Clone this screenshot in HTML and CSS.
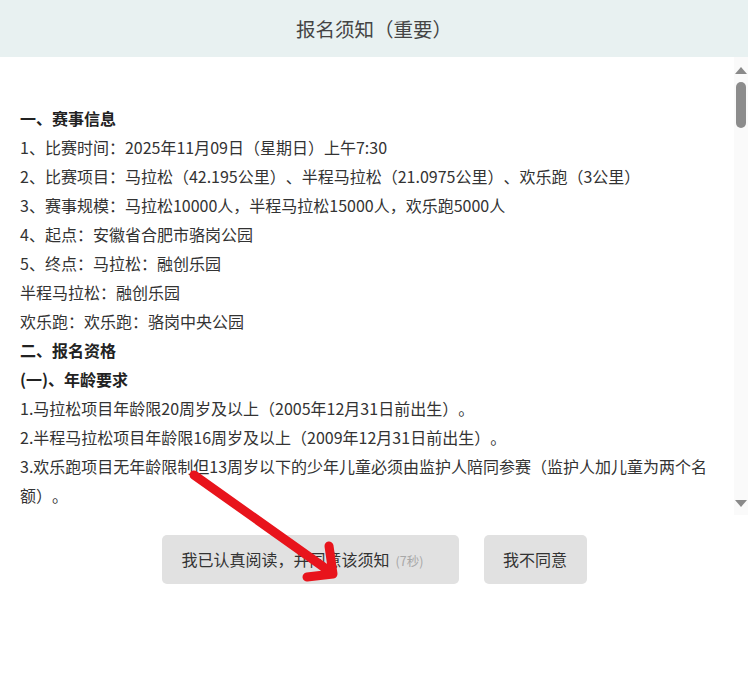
FILE: index.html
```html
<!DOCTYPE html>
<html lang="zh-CN">
<head>
<meta charset="utf-8">
<title>报名须知（重要）</title>
<link rel="stylesheet" href="styles.css">
</head>
<body>
<div class="page">
  <div class="header">报名须知（重要）</div>
  <div class="content">
    <div class="text">
      <p class="b">一、赛事信息</p>
      <p>1、比赛时间：2025年11月09日（星期日）上午7:30</p>
      <p>2、比赛项目：马拉松（42.195公里）、半程马拉松（21.0975公里）、欢乐跑（3公里）</p>
      <p>3、赛事规模：马拉松10000人，半程马拉松15000人，欢乐跑5000人</p>
      <p>4、起点：安徽省合肥市骆岗公园</p>
      <p>5、终点：马拉松：融创乐园</p>
      <p>半程马拉松：融创乐园</p>
      <p>欢乐跑：欢乐跑：骆岗中央公园</p>
      <p class="b">二、报名资格</p>
      <p class="b">(一)、年龄要求</p>
      <p>1.马拉松项目年龄限20周岁及以上（2005年12月31日前出生）。</p>
      <p>2.半程马拉松项目年龄限16周岁及以上（2009年12月31日前出生）。</p>
      <p>3.欢乐跑项目无年龄限制但13周岁以下的少年儿童必须由监护人陪同参赛（监护人加儿童为两个名额）。</p>
    </div>
    <div class="scrollbar">
      <div class="arrow-up"></div>
      <div class="thumb"></div>
      <div class="spacer"></div>
      <div class="arrow-down"></div>
    </div>
  </div>
  <div class="actions">
    <div class="btn btn-agree">我已认真阅读，并同意该须知<span class="count">(7秒)</span></div>
    <div class="btn btn-deny">我不同意</div>
  </div>
  <svg class="annot" width="748" height="700" viewBox="0 0 748 700">
    <g stroke="#e8141c" stroke-width="9" stroke-linecap="round" stroke-linejoin="round" fill="none">
      <line x1="194" y1="475" x2="332" y2="573"/>
      <polyline points="329,546 333,574 307,577"/>
    </g>
  </svg>
</div>
</body>
</html>
```
FILE: styles.css
```css
html, body {
  margin: 0;
  padding: 0;
  background: #ffffff;
}
.page {
  position: relative;
  width: 748px;
  height: 700px;
  overflow: hidden;
  font-family: "Noto Sans CJK SC", "Noto Sans", sans-serif;
  color: #333333;
  text-spacing-trim: space-all;
}
.header {
  height: 57px;
  line-height: 57px;
  background: #e8f1f1;
  text-align: center;
  font-size: 19.5px;
  color: #444444;
}
.content {
  display: flex;
  height: 458px;
}
.text {
  flex: 1;
  padding: 47px 19px 0 20px;
  overflow: hidden;
  font-size: 16px;
  line-height: 29px;
}
.text p {
  margin: 0;
}
.text .b {
  font-weight: bold;
  color: #222222;
}
.scrollbar {
  width: 14px;
  display: flex;
  flex-direction: column;
  align-items: center;
  background: #fafafa;
}
.arrow-up {
  margin-top: 10px;
  width: 0;
  height: 0;
  border-left: 6px solid transparent;
  border-right: 6px solid transparent;
  border-bottom: 7px solid #8a8a8a;
}
.thumb {
  margin-top: 8px;
  width: 10px;
  height: 46px;
  border-radius: 5px;
  background: #8c8c8c;
}
.spacer {
  flex: 1;
}
.arrow-down {
  margin-bottom: 8px;
  width: 0;
  height: 0;
  border-left: 6px solid transparent;
  border-right: 6px solid transparent;
  border-top: 7px solid #8a8a8a;
}
.actions {
  display: flex;
  justify-content: center;
  gap: 25px;
  margin-top: 20px;
}
.btn {
  height: 49px;
  line-height: 49px;
  background: #e1e1e1;
  border-radius: 5px;
  font-size: 16px;
  color: #333333;
  box-sizing: border-box;
}
.btn-agree {
  width: 297px;
  padding-left: 20px;
}
.btn-deny {
  width: 103px;
  text-align: center;
}
.count {
  font-size: 12.5px;
  color: #a8a8a8;
  margin-left: 6px;
}
.annot {
  position: absolute;
  left: 0;
  top: 0;
  pointer-events: none;
}
```
